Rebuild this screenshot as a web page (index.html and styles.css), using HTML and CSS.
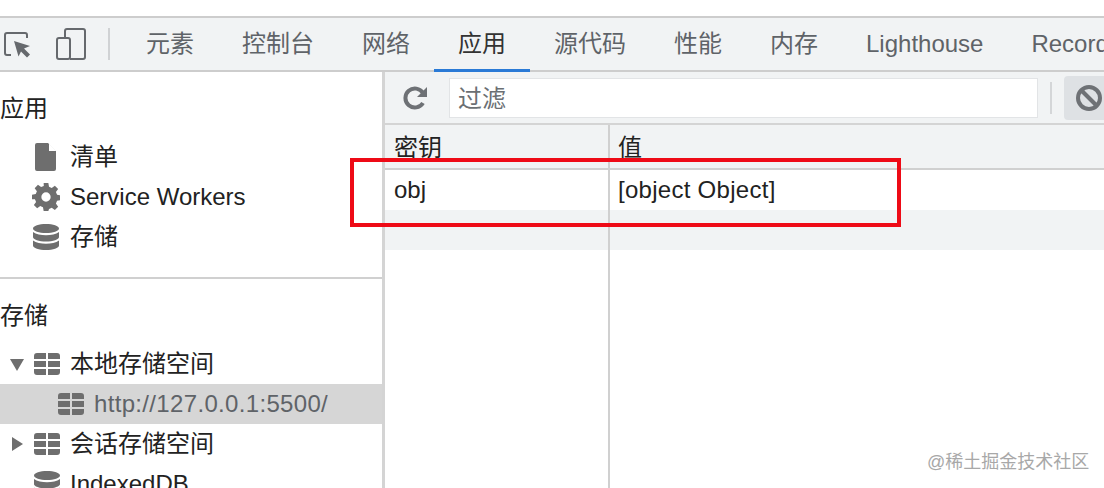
FILE: index.html
```html
<!DOCTYPE html>
<html lang="zh-CN">
<head>
  <meta charset="UTF-8">
  <title>DevTools - Application</title>
  <link rel="stylesheet" href="styles.css">
</head>
<body>
  <svg class="defs" width="0" height="0">
    <symbol id="grid" viewBox="0 0 26 22">
      <path d="M0 3a3 3 0 0 1 3-3h9v6H0zM14 0h9a3 3 0 0 1 3 3v3H14zM0 8h12v6H0zM14 8h12v6H14zM0 16h12v6H3a3 3 0 0 1-3-3zM14 16h12v3a3 3 0 0 1-3 3h-9z"/>
    </symbol>
    <symbol id="db" viewBox="0 0 26 26">
      <path d="M13 0c7 0 13 2 13 4.500S20 9 13 9 0 7 0 4.500 6 0 13 0zM0 8c3 2.500 8 3.200 13 3.200S23 10.500 26 8v5c0 2.500-6 4.500-13 4.500S0 15.500 0 13zM0 16.500c3 2.500 8 3.200 13 3.200s10-.7 13-3.200v5C26 24 20 26 13 26S0 24 0 21.500z"/>
    </symbol>
  </svg>

  <div class="tabbar">
    <div class="tools">
      <svg class="tool-icon" width="28" height="28" viewBox="0 0 28 28">
        <path class="line" d="M7 25H3a2 2 0 0 1-2-2V5a2 2 0 0 1 2-2h18a2 2 0 0 1 2 2v3"/>
        <path class="fill" d="M10 11l16 5-6 2.500 6 6-3 3-6-6-2.500 5z"/>
      </svg>
      <svg class="tool-icon" width="30" height="32" viewBox="0 0 30 32">
        <path class="line" d="M9 10V3a2 2 0 0 1 2-2h16a2 2 0 0 1 2 2v26a2 2 0 0 1-2 2H14"/>
        <rect class="line" x="1" y="10" width="13" height="21" rx="2"/>
      </svg>
      <span class="tool-sep"></span>
    </div>
    <div class="tab">元素</div>
    <div class="tab">控制台</div>
    <div class="tab">网络</div>
    <div class="tab active">应用</div>
    <div class="tab">源代码</div>
    <div class="tab">性能</div>
    <div class="tab">内存</div>
    <div class="tab">Lighthouse</div>
    <div class="tab">Recorder</div>
  </div>

  <div class="panel">
    <div class="sidebar">
      <div class="section first">
        <div class="section-title">应用</div>
        <div class="row">
          <svg class="icon" width="22" height="28" viewBox="0 0 22 28"><path d="M2 0h11l8 8v18a2 2 0 0 1-2 2H2a2 2 0 0 1-2-2V2a2 2 0 0 1 2-2zM14 1v7h7z" fill-rule="evenodd"/></svg>
          <span>清单</span>
        </div>
        <div class="row">
          <svg class="icon" width="28" height="28" viewBox="0 0 24 24"><path fill-rule="evenodd" d="M10 0h4l.6 3.200 2.300 1 2.700-1.900 2.800 2.800-1.900 2.700 1 2.300 3.200.6v4l-3.200.6-1 2.300 1.900 2.700-2.800 2.800-2.700-1.900-2.300 1L14 24h-4l-.6-3.200-2.300-1-2.700 1.900-2.800-2.800 1.900-2.700-1-2.300L0 14v-4l3.200-.6 1-2.300-1.900-2.700 2.800-2.800 2.700 1.900 2.300-1zM12 8a4 4 0 1 0 0 8 4 4 0 0 0 0-8z"/></svg>
          <span>Service Workers</span>
        </div>
        <div class="row">
          <svg class="icon" width="26" height="26"><use href="#db"/></svg>
          <span>存储</span>
        </div>
      </div>
      <div class="section">
        <div class="section-title">存储</div>
        <div class="row tree">
          <span class="arrow down"></span>
          <svg class="icon" width="26" height="22"><use href="#grid"/></svg>
          <span>本地存储空间</span>
        </div>
        <div class="row tree selected">
          <svg class="icon" width="26" height="22"><use href="#grid"/></svg>
          <span class="url">http://127.0.0.1:5500/</span>
        </div>
        <div class="row tree">
          <span class="arrow right"></span>
          <svg class="icon" width="26" height="22"><use href="#grid"/></svg>
          <span>会话存储空间</span>
        </div>
        <div class="row tree">
          <svg class="icon" width="26" height="26"><use href="#db"/></svg>
          <span>IndexedDB</span>
        </div>
      </div>
    </div>

    <div class="content">
      <div class="filterbar">
        <svg class="refresh" width="28" height="28" viewBox="0 0 28 28">
          <path class="refresh-arc" d="M21 19a9.500 9.500 0 1 1 0-10"/>
          <path class="refresh-head" d="M25 3v10H15z"/>
        </svg>
        <div class="filter-input">过滤</div>
        <span class="bar-sep"></span>
        <div class="clear-btn">
          <svg width="28" height="28" viewBox="0 0 28 28"><circle cx="14" cy="14" r="11" class="ban"/><path class="ban" d="M6 6l16 16"/></svg>
        </div>
      </div>
      <div class="table">
        <div class="cell head key">密钥</div>
        <div class="cell head">值</div>
        <div class="cell key">obj</div>
        <div class="cell value">[object Object]</div>
        <div class="cell stripe key"></div>
        <div class="cell stripe"></div>
        <div class="cell key"></div>
        <div class="cell"></div>
      </div>
    </div>
  </div>

  <div class="redbox"></div>
  <div class="watermark">@稀土掘金技术社区</div>
</body>
</html>
```
FILE: styles.css
```css
html, body {
  margin: 0;
  height: 488px;
  overflow: hidden;
}
body {
  position: relative;
  background: #fff;
  font-family: 'Liberation Sans', 'Noto Sans CJK SC', sans-serif;
  font-size: 24px;
  line-height: 40px;
  color: #222;
}
.defs {
  position: absolute;
}
.tabbar {
  margin-top: 16px;
  height: 52px;
  display: flex;
  align-items: stretch;
  background: #f1f3f4;
  border-top: 2px solid #cdcdcd;
  border-bottom: 2px solid #cdcdcd;
  white-space: nowrap;
  color: #5f6368;
}
.tools {
  display: flex;
  align-items: center;
  width: 122px;
  flex: none;
  padding-left: 4px;
  box-sizing: border-box;
}
.tool-icon {
  flex: none;
}
.tool-icon + .tool-icon {
  margin-left: 24px;
}
.line {
  fill: none;
  stroke: #66696d;
  stroke-width: 2;
}
.fill {
  fill: #66696d;
}
.tool-sep {
  width: 2px;
  height: 32px;
  margin-left: 22px;
  background: #d0d2d4;
}
.tab {
  position: relative;
  display: flex;
  align-items: center;
  padding: 0 24px;
  flex: none;
}
.tab.active {
  color: #333;
}
.tab.active::after {
  content: "";
  position: absolute;
  left: 0;
  right: 0;
  bottom: -2px;
  height: 3px;
  background: #2a7ad6;
}
.panel {
  display: flex;
  height: 416px;
}
.sidebar {
  width: 382px;
  flex: none;
  border-right: 3px solid #d4d4d4;
  overflow: hidden;
}
.section {
  padding-top: 17px;
}
.section.first {
  height: 188px;
  border-bottom: 2px solid #d0d0d0;
}
.section-title {
  height: 40px;
  margin-bottom: 8px;
}
.row {
  height: 40px;
  display: flex;
  align-items: center;
  padding-left: 32px;
  white-space: nowrap;
}
.icon {
  fill: #6e6e6e;
  flex: none;
  margin-right: 12px;
}
.first .row .icon {
  width: 28px;
  margin-right: 10px;
}
.tree {
  padding-left: 34px;
  position: relative;
}
.tree .icon {
  margin-right: 10px;
}
.selected {
  background: #d6d6d6;
  padding-left: 58px;
  color: #5f6368;
}
.url {
  letter-spacing: 0.33px;
}
.arrow {
  position: absolute;
  width: 0;
  height: 0;
}
.arrow.down {
  left: 10px;
  top: 15px;
  border-left: 7px solid transparent;
  border-right: 7px solid transparent;
  border-top: 12px solid #6e6e6e;
}
.arrow.right {
  left: 12px;
  top: 13px;
  border-top: 7px solid transparent;
  border-bottom: 7px solid transparent;
  border-left: 11px solid #6e6e6e;
}
.content {
  flex: 1;
  min-width: 0;
  display: flex;
  flex-direction: column;
}
.filterbar {
  height: 53px;
  flex: none;
  box-sizing: border-box;
  display: flex;
  align-items: center;
  background: #f1f3f4;
  border-bottom: 2px solid #d4d4d4;
  padding-left: 17px;
}
.refresh {
  flex: none;
}
.refresh-arc {
  fill: none;
  stroke: #6e7175;
  stroke-width: 4;
}
.refresh-head {
  fill: #6e7175;
}
.filter-input {
  width: 589px;
  height: 40px;
  flex: none;
  margin-left: 19px;
  box-sizing: border-box;
  border: 1px solid #e2e4e6;
  background: #fff;
  padding-left: 8px;
  line-height: 40px;
  color: #6b6f73;
}
.bar-sep {
  width: 2px;
  height: 32px;
  flex: none;
  margin-left: 12px;
  background: #d4d6d8;
}
.clear-btn {
  width: 60px;
  height: 44px;
  flex: none;
  margin-left: 12px;
  display: flex;
  align-items: center;
  padding-left: 11px;
  box-sizing: border-box;
  background: #dee1e4;
  border-radius: 4px;
}
.ban {
  fill: none;
  stroke: #6e7175;
  stroke-width: 4;
}
.table {
  flex: 1;
  display: grid;
  grid-template-columns: 225px 1fr;
  grid-template-rows: 45px 40px 40px 1fr;
}
.cell {
  padding-left: 9px;
}
.cell.key {
  border-right: 2px solid #d0d0d0;
}
.cell + .value {
  padding-left: 8px;
  letter-spacing: 0.28px;
}
.head {
  background: #f1f3f4;
  border-bottom: 2px solid #d0d0d0;
  line-height: 45px;
}
.head:nth-child(2) {
  padding-left: 8px;
}
.stripe {
  background: #f1f3f4;
}
.redbox {
  position: absolute;
  left: 350px;
  top: 158px;
  width: 543px;
  height: 61px;
  border: 4px solid #ee0a16;
}
.watermark {
  position: absolute;
  left: 927px;
  top: 451px;
  font-size: 18px;
  line-height: 22px;
  color: #a8a8a8;
  white-space: nowrap;
}
```
